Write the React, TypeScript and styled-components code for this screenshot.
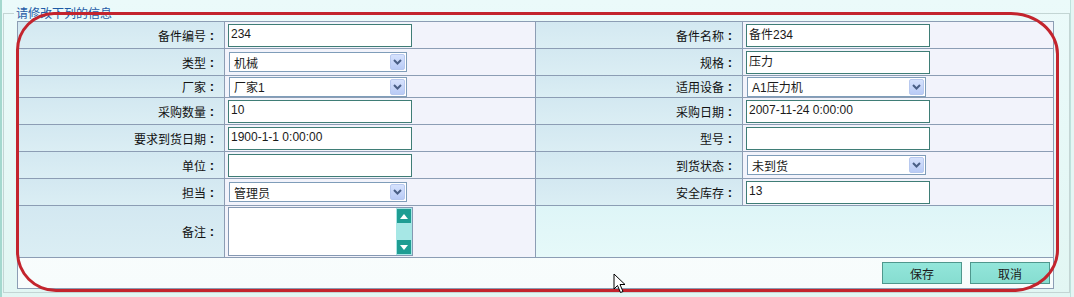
import React, { FC } from 'react'
import styled, { createGlobalStyle } from 'styled-components'

const GlobalStyle = createGlobalStyle`
    html, body {
        margin: 0;
        padding: 0;
        background: #e6f7f5;
    }
    body {
        font-family: 'Liberation Sans', 'Noto Sans CJK SC', sans-serif;
        font-size: 12px;
        color: #1a1a1a;
    }
`

const Wrapper = styled.div`
    position: relative;
    width: 1074px;
    height: 297px;
    overflow: hidden;
    background: #e4f6f4;
`

const Page = styled.div`
    width: 1071px;
    height: 297px;
    box-sizing: border-box;
    padding: 6px 0 0 1px;
    background: linear-gradient(180deg, #ebfafa 0%, #e2f6f3 100%);
    border-left: 2px solid #a4d8ce;
    border-right: 1px solid #bfe2dc;
`

const Fieldset = styled.fieldset`
    margin: 0;
    padding: 1px 15px 3px 13px;
    border: 1px solid #c3d5d4;
    min-width: 0;
`

const Legend = styled.legend`
    margin-left: -3px;
    padding: 0 2px;
    font-family: 'Noto Sans CJK SC', sans-serif;
    font-size: 12px;
    line-height: 14px;
    color: #1f5ba6;
`

const Box = styled.div`
    border: 1px solid #8c9db4;
    background: linear-gradient(180deg, #ffffff 0%, #f7fcfc 100%);
`

const Grid = styled.div`
    display: grid;
    grid-template-columns: 207px 311px 207px 310px;
    grid-template-rows: 27px 27px 22px 27px 27px 27px 27px 52px;
`

const Cell = styled.div<{ $last?: boolean }>`
    box-sizing: border-box;
    display: flex;
    align-items: center;
    border-bottom: 1px solid #8c9db4;
    border-right: ${(p) => (p.$last ? 'none' : '1px solid #8c9db4')};
`

const LabelCell = styled(Cell)`
    justify-content: flex-end;
    padding-right: 6px;
    background: linear-gradient(180deg, #d3e8f1 0%, #dbeef4 100%);
    font-family: 'Noto Sans CJK SC', sans-serif;
    font-size: 12px;
    color: #111;
`

const Colon = styled.span`
    width: 12px;
    text-align: center;
    font-weight: bold;
    font-family: 'Liberation Sans', sans-serif;
    font-size: 13px;
`

const ValueCell = styled(Cell)`
    padding-left: 3px;
    background: #f2f3fb;
`

const EmptyCell = styled(Cell)`
    grid-column: span 2;
    background: linear-gradient(180deg, #def5f7 0%, #e6f9f9 100%);
`

const TextInput = styled.input`
    box-sizing: border-box;
    width: 184px;
    height: 23px;
    margin: 0;
    padding: 0 2px 3px 2px;
    border: 1px solid #3f7d76;
    background: #fff;
    font-family: 'Liberation Sans', 'Noto Sans CJK SC', sans-serif;
    font-size: 12px;
    color: #1a1a1a;
    outline: none;
`

const SelectBox = styled.div<{ $width: number }>`
    box-sizing: border-box;
    width: ${(p) => p.$width}px;
    height: 20px;
    margin-left: 1px;
    display: flex;
    align-items: center;
    justify-content: space-between;
    border: 1px solid #7f9db9;
    background: #fff;
    padding: 0 1px 0 4px;
    font-family: 'Liberation Sans', 'Noto Sans CJK SC', sans-serif;
    font-size: 12px;
`

const ArrowButton = styled.span`
    box-sizing: border-box;
    width: 15px;
    height: 16px;
    display: flex;
    align-items: center;
    justify-content: center;
    border: 1px solid #b8c9ef;
    border-radius: 2px;
    background: linear-gradient(180deg, #d6e2fd 0%, #b9cbf6 100%);
`

const MemoBox = styled.div`
    box-sizing: border-box;
    width: 185px;
    height: 49px;
    display: flex;
    border: 1px solid #8598b2;
    background: #fff;
`

const MemoArea = styled.textarea`
    flex: 1;
    border: none;
    resize: none;
    outline: none;
    padding: 2px;
    font-family: 'Liberation Sans', 'Noto Sans CJK SC', sans-serif;
    font-size: 12px;
`

const ScrollTrack = styled.div`
    width: 16px;
    box-sizing: border-box;
    padding: 1px;
    display: flex;
    flex-direction: column;
    justify-content: space-between;
    background: #a6e7e5;
`

const ScrollButton = styled.span`
    width: 14px;
    height: 14px;
    display: flex;
    align-items: center;
    justify-content: center;
    background: #1f9d93;
`

const ButtonRow = styled.div`
    height: 30px;
    box-sizing: border-box;
    display: flex;
    justify-content: flex-end;
    gap: 8px;
    padding: 4px 3px 0 0;
`

const ActionButton = styled.button`
    width: 80px;
    height: 22px;
    margin: 0;
    padding: 0;
    border: 1px solid #4f978d;
    background: linear-gradient(180deg, #93e6da 0%, #86ddd0 100%);
    font-family: 'Noto Sans CJK SC', sans-serif;
    font-size: 12px;
    color: #1a1a1a;
`

const Annotation = styled.div`
    position: absolute;
    left: 16px;
    top: 12px;
    width: 1043px;
    height: 280px;
    box-sizing: border-box;
    border: 3px solid #c3242d;
    border-radius: 38px 48px 46px 40px / 38px 42px 42px 40px;
    pointer-events: none;
`

const Cursor = styled.svg`
    position: absolute;
    left: 613px;
    top: 273px;
    pointer-events: none;
`

const Chevron: FC = () => (
    <svg width="9" height="6" viewBox="0 0 9 6">
        <path d="M1 1 L4.5 4.5 L8 1" fill="none" stroke="#4a5f86" strokeWidth="2" />
    </svg>
)

const Select: FC<{ value: string; width: number }> = ({ value, width }) => (
    <SelectBox $width={width}>
        <span>{value}</span>
        <ArrowButton>
            <Chevron />
        </ArrowButton>
    </SelectBox>
)

const Label: FC<{ text: string; last?: boolean }> = ({ text }) => (
    <LabelCell>
        <span>{text}</span>
        <Colon>:</Colon>
    </LabelCell>
)

type Field = { label: string; kind: 'input' | 'select'; value: string }

const rows: [Field, Field][] = [
    [
        { label: '备件编号', kind: 'input', value: '234' },
        { label: '备件名称', kind: 'input', value: '备件234' },
    ],
    [
        { label: '类型', kind: 'select', value: '机械' },
        { label: '规格', kind: 'input', value: '压力' },
    ],
    [
        { label: '厂家', kind: 'select', value: '厂家1' },
        { label: '适用设备', kind: 'select', value: 'A1压力机' },
    ],
    [
        { label: '采购数量', kind: 'input', value: '10' },
        { label: '采购日期', kind: 'input', value: '2007-11-24 0:00:00' },
    ],
    [
        { label: '要求到货日期', kind: 'input', value: '1900-1-1 0:00:00' },
        { label: '型号', kind: 'input', value: '' },
    ],
    [
        { label: '单位', kind: 'input', value: '' },
        { label: '到货状态', kind: 'select', value: '未到货' },
    ],
    [
        { label: '担当', kind: 'select', value: '管理员' },
        { label: '安全库存', kind: 'input', value: '13' },
    ],
]

const renderValue = (f: Field, right: boolean) =>
    f.kind === 'input' ? (
        <TextInput type="text" defaultValue={f.value} />
    ) : (
        <Select value={f.value} width={right ? 179 : 178} />
    )

const App: FC = () => {
    return (
        <Wrapper>
            <GlobalStyle />
            <Page>
                <Fieldset>
                    <Legend>请修改下列的信息</Legend>
                    <Box>
                        <Grid>
                            {rows.map(([a, b], i) => (
                                <React.Fragment key={i}>
                                    <Label text={a.label} />
                                    <ValueCell>{renderValue(a, false)}</ValueCell>
                                    <Label text={b.label} />
                                    <ValueCell $last>{renderValue(b, true)}</ValueCell>
                                </React.Fragment>
                            ))}
                            <Label text="备注" />
                            <ValueCell>
                                <MemoBox>
                                    <MemoArea />
                                    <ScrollTrack>
                                        <ScrollButton>
                                            <svg width="8" height="5" viewBox="0 0 8 5">
                                                <path d="M0 5 L4 0 L8 5 Z" fill="#fff" />
                                            </svg>
                                        </ScrollButton>
                                        <ScrollButton>
                                            <svg width="8" height="5" viewBox="0 0 8 5">
                                                <path d="M0 0 L4 5 L8 0 Z" fill="#fff" />
                                            </svg>
                                        </ScrollButton>
                                    </ScrollTrack>
                                </MemoBox>
                            </ValueCell>
                            <EmptyCell $last />
                        </Grid>
                        <ButtonRow>
                            <ActionButton>保存</ActionButton>
                            <ActionButton>取消</ActionButton>
                        </ButtonRow>
                    </Box>
                </Fieldset>
            </Page>
            <Annotation />
            <Cursor width="13" height="21" viewBox="0 0 13 21">
                <path
                    d="M1 1 L1 16 L4.5 12.5 L7.5 19.5 L10 18.5 L7 11.5 L12 11.5 Z"
                    fill="#fff"
                    stroke="#000"
                    strokeWidth="1"
                    strokeLinejoin="round"
                />
            </Cursor>
        </Wrapper>
    )
}

export default App
